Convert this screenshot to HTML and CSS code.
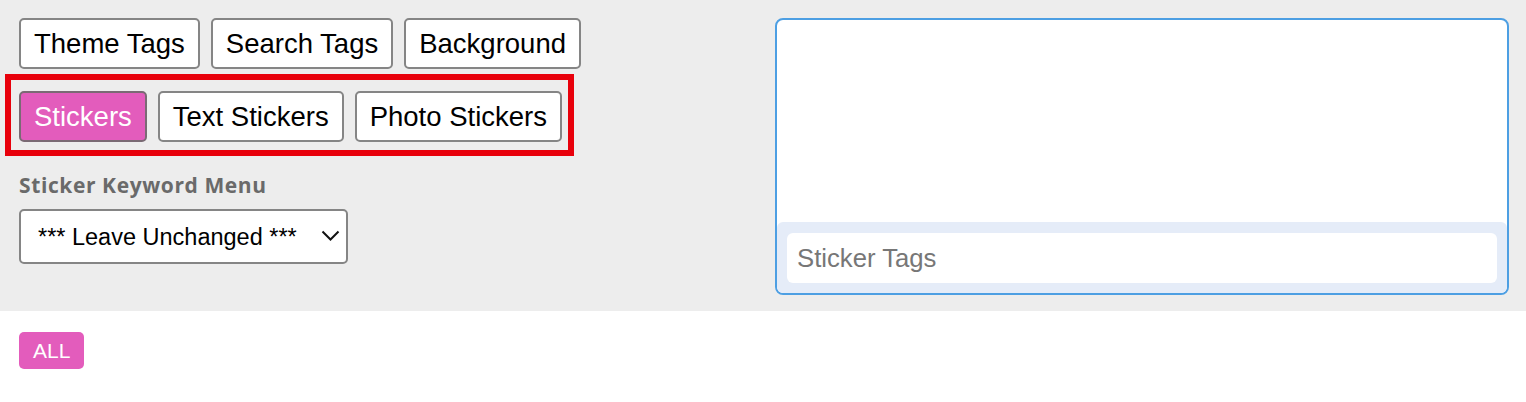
FILE: index.html
```html
<!DOCTYPE html>
<html>
<head>
<meta charset="utf-8">
<link rel="stylesheet" href="styles.css">
</head>
<body>
<div class="panel">
  <div class="left">
    <div class="btn-row">
      <button class="btn">Theme Tags</button>
      <button class="btn">Search Tags</button>
      <button class="btn">Background</button>
    </div>
    <div class="highlight">
      <button class="btn btn-active">Stickers</button>
      <button class="btn">Text Stickers</button>
      <button class="btn">Photo Stickers</button>
    </div>
    <div class="field-label">Sticker Keyword Menu</div>
    <div class="select-wrap">
      <select class="select">
        <option>*** Leave Unchanged ***</option>
      </select>
      <svg class="chevron" width="19" height="11" viewBox="0 0 19 11"><path d="M1.5 1.5 L9.5 9.5 L17.5 1.5" fill="none" stroke="#111" stroke-width="2"/></svg>
    </div>
  </div>
  <div class="tagbox">
    <div class="tagbox-area"></div>
    <div class="tagbox-footer">
      <input class="tag-input" type="text" placeholder="Sticker Tags">
    </div>
  </div>
</div>
<div class="filters">
  <span class="pill">ALL</span>
</div>
</body>
</html>
```
FILE: styles.css
```css
html, body {
  margin: 0;
  padding: 0;
  background: #ffffff;
}
body {
  font-family: "Liberation Sans", Arial, sans-serif;
}
.panel {
  background: #ededed;
  display: grid;
  grid-template-columns: 1fr 734px;
  column-gap: 12px;
  padding: 18px 17px 16px 19px;
  height: 277px;
}
.left {
  display: flex;
  flex-direction: column;
  align-items: flex-start;
}
.btn-row {
  display: flex;
  gap: 11px;
}
.btn {
  font-family: "Liberation Sans", Arial, sans-serif;
  font-size: 27.5px;
  line-height: 32px;
  color: #000;
  background: #fff;
  border: 2px solid #858585;
  border-radius: 5px;
  padding: 7px 13px;
  margin: 0;
  height: 51px;
}
.btn-active {
  background: #e35cbc;
  color: #fff;
  border-color: #7a6a74;
}
.highlight {
  display: flex;
  gap: 11px;
  border: 6px solid #e8000b;
  margin: 5px 0 0 -14px;
  padding: 11px 6px 8px 8px;
}
.field-label {
  font-family: "Open Sans", "Noto Sans", sans-serif;
  font-weight: 700;
  font-size: 21px;
  letter-spacing: 0.6px;
  line-height: 26px;
  color: #6a6a6a;
  margin-top: 16px;
}
.select-wrap {
  position: relative;
  margin-top: 11px;
}
.select {
  appearance: none;
  -webkit-appearance: none;
  font-family: "Liberation Sans", Arial, sans-serif;
  font-size: 23.5px;
  color: #000;
  background: #fff;
  border: 2px solid #858585;
  border-radius: 5px;
  width: 329px;
  height: 55px;
  padding: 0 0 0 17px;
  margin: 0;
}
.chevron {
  position: absolute;
  left: 302px;
  top: 21px;
  pointer-events: none;
}
.tagbox {
  border: 2px solid #4d9fe3;
  border-radius: 8px;
  background: #fff;
  display: flex;
  flex-direction: column;
  overflow: hidden;
}
.tagbox-area {
  flex: 1;
}
.tagbox-footer {
  background: #e5ecf8;
  padding: 11px 10px 10px 10px;
  border-radius: 6px 6px 0 0;
}
.tag-input {
  display: block;
  box-sizing: border-box;
  width: 100%;
  height: 50px;
  border: none;
  border-radius: 6px;
  background: #fff;
  font-family: "Liberation Sans", Arial, sans-serif;
  font-size: 25.7px;
  padding: 0 10px;
  outline: none;
}
.tag-input::placeholder {
  color: #777;
}
.filters {
  padding: 21px 19px;
  display: flex;
}
.pill {
  background: #e35cbc;
  color: #fff;
  font-family: "Liberation Sans", Arial, sans-serif;
  font-size: 21px;
  line-height: 37px;
  height: 37px;
  padding: 0 14px;
  border-radius: 5px;
}
```
